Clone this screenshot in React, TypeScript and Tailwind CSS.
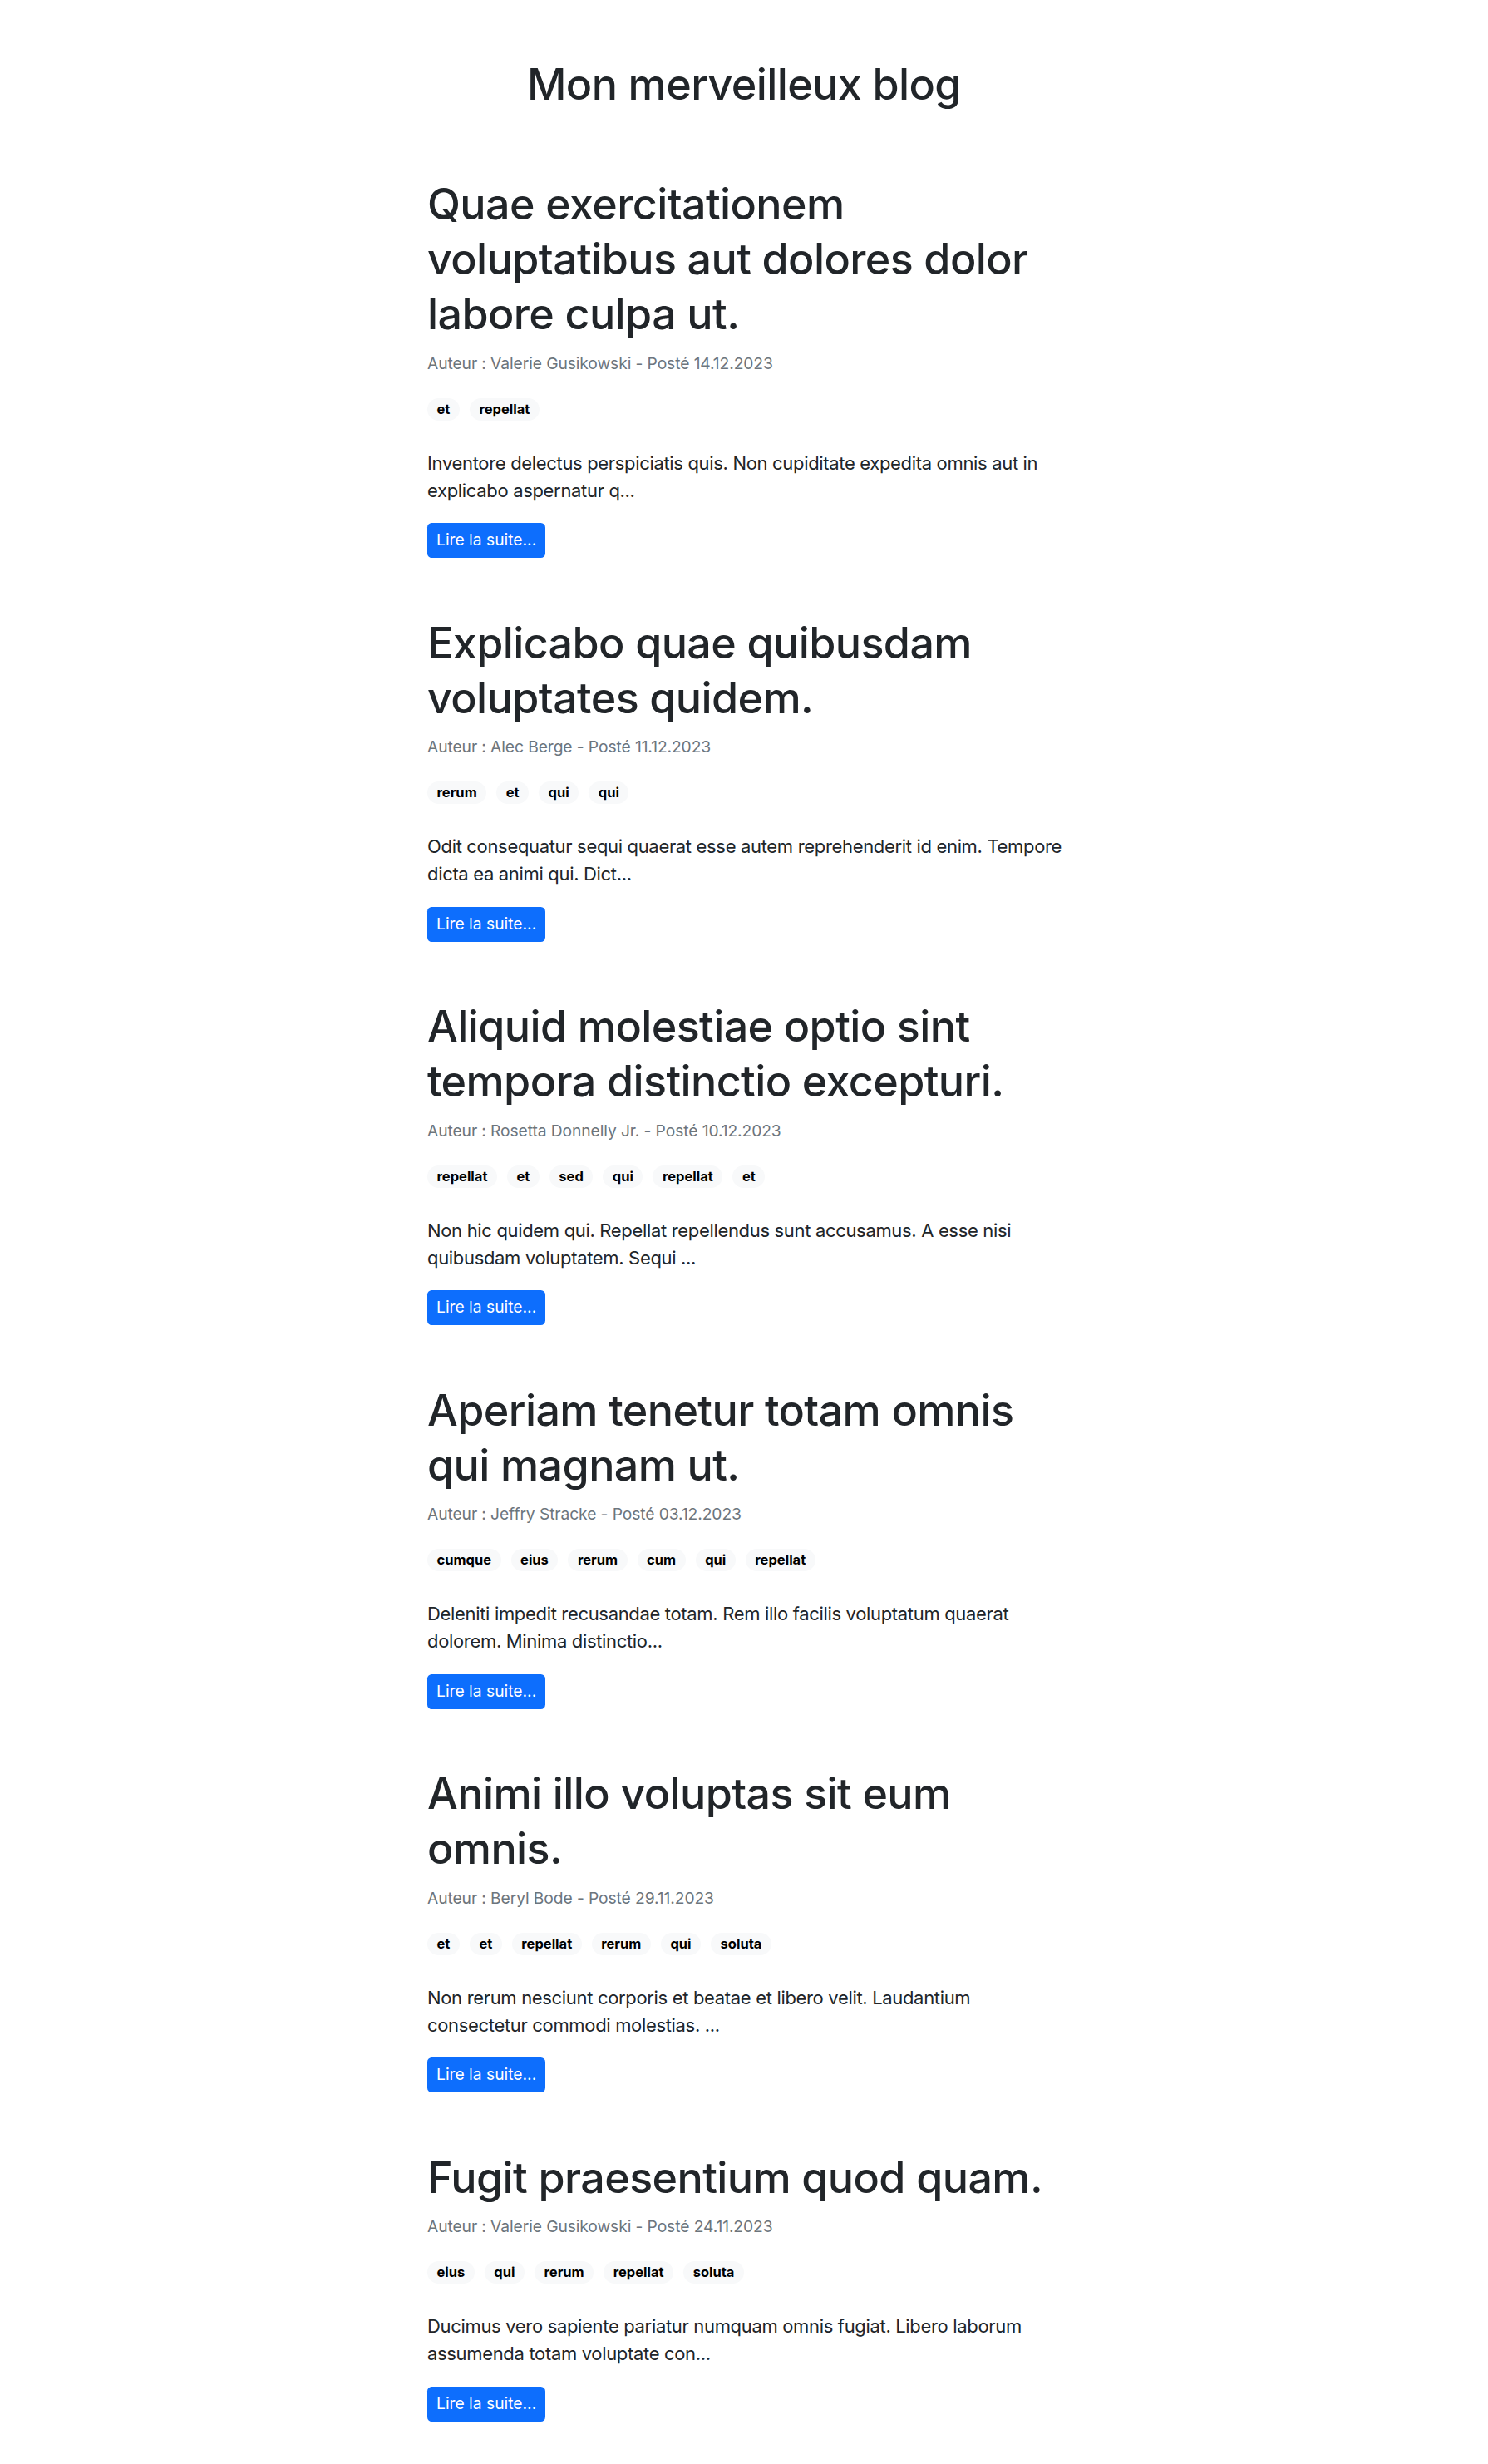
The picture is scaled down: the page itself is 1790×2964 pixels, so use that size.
import React from "react";

type Post = {
  title: string;
  author: string;
  date: string;
  tags: string[];
  excerpt: string;
};

const posts: Post[] = [
  {
    title: "Quae exercitationem voluptatibus aut dolores dolor labore culpa ut.",
    author: "Valerie Gusikowski",
    date: "14.12.2023",
    tags: ["et", "repellat"],
    excerpt:
      "Inventore delectus perspiciatis quis. Non cupiditate expedita omnis aut in explicabo aspernatur q...",
  },
  {
    title: "Explicabo quae quibusdam voluptates quidem.",
    author: "Alec Berge",
    date: "11.12.2023",
    tags: ["rerum", "et", "qui", "qui"],
    excerpt:
      "Odit consequatur sequi quaerat esse autem reprehenderit id enim. Tempore dicta ea animi qui. Dict...",
  },
  {
    title: "Aliquid molestiae optio sint tempora distinctio excepturi.",
    author: "Rosetta Donnelly Jr.",
    date: "10.12.2023",
    tags: ["repellat", "et", "sed", "qui", "repellat", "et"],
    excerpt:
      "Non hic quidem qui. Repellat repellendus sunt accusamus. A esse nisi quibusdam voluptatem. Sequi ...",
  },
  {
    title: "Aperiam tenetur totam omnis qui magnam ut.",
    author: "Jeffry Stracke",
    date: "03.12.2023",
    tags: ["cumque", "eius", "rerum", "cum", "qui", "repellat"],
    excerpt:
      "Deleniti impedit recusandae totam. Rem illo facilis voluptatum quaerat dolorem. Minima distinctio...",
  },
  {
    title: "Animi illo voluptas sit eum omnis.",
    author: "Beryl Bode",
    date: "29.11.2023",
    tags: ["et", "et", "repellat", "rerum", "qui", "soluta"],
    excerpt:
      "Non rerum nesciunt corporis et beatae et libero velit. Laudantium consectetur commodi molestias. ...",
  },
  {
    title: "Fugit praesentium quod quam.",
    author: "Valerie Gusikowski",
    date: "24.11.2023",
    tags: ["eius", "qui", "rerum", "repellat", "soluta"],
    excerpt:
      "Ducimus vero sapiente pariatur numquam omnis fugiat. Libero laborum assumenda totam voluptate con...",
  },
];

function Article({ post }: { post: Post }) {
  return (
    <article className="mb-[69.5px]">
      <h2 className="text-[52px] leading-[66px] font-medium tracking-[-0.6px] text-[#212529]">
        {post.title}
      </h2>
      <div className="mt-[11.5px] text-[19.25px] leading-[29px] tracking-[-0.1px] text-[#6c757d]">
        Auteur : {post.author} - Posté {post.date}
      </div>
      <div className="mt-[27px] flex flex-wrap gap-[12px]">
        {post.tags.map((t, i) => (
          <span
            key={i}
            className="flex h-[27px] items-center rounded-full bg-[#f8f9fa] px-[11.5px] text-[16.5px] font-bold leading-none text-black"
          >
            {t}
          </span>
        ))}
      </div>
      <p className="mt-[35px] text-[22px] leading-[33px] tracking-[-0.33px] text-[#212529]">
        {post.excerpt}
      </p>
      <button
        type="button"
        className="mt-[22.5px] flex h-[42px] items-center rounded-[5.5px] bg-[#0d6efd] px-[11px] text-[19.25px] leading-none text-white"
      >
        Lire la suite...
      </button>
    </article>
  );
}

export default function App() {
  return (
    <div className="min-h-screen bg-white font-['Inter','Noto_Sans',sans-serif] text-[#212529]">
      <h1 className="pt-[69px] text-center text-[52px] font-medium leading-[66px] tracking-[-0.6px]">
        Mon merveilleux blog
      </h1>
      <main className="mx-auto mt-[78px] w-[782px] pl-[10px]">
        {posts.map((p, i) => (
          <Article key={i} post={p} />
        ))}
      </main>
    </div>
  );
}
